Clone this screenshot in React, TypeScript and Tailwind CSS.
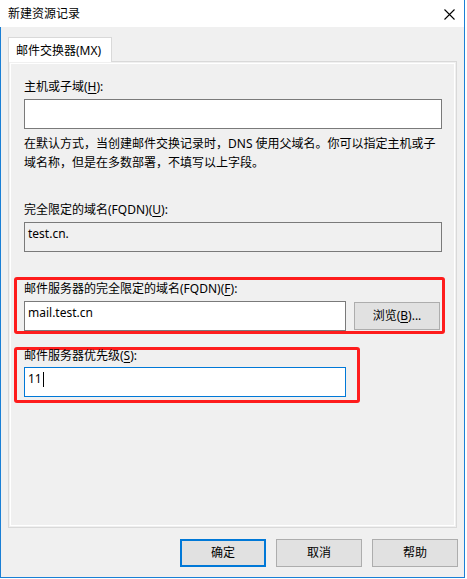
import React from "react";

const font = { fontFamily: '"Noto Sans", "Noto Sans CJK SC", sans-serif' };

function Btn({ children, primary }: { children: React.ReactNode; primary?: boolean }) {
  return (
    <div
      className={
        "flex h-[28px] w-[86px] items-center justify-center bg-[#e1e1e1] text-[12px] leading-[16px] text-black " +
        (primary ? "border-2 border-[#0078d7]" : "border border-[#adadad]")
      }
    >
      {children}
    </div>
  );
}

export default function App() {
  return (
    <div className="flex h-[579px] w-[467px] bg-white text-[12px] text-black" style={font}>
      <div className="flex h-[578px] w-[465px] flex-col border-b border-r border-[#1a7fd5]">
        {/* title bar */}
        <div className="flex h-[27px] items-center justify-between bg-white pl-[8px] pr-[9px]">
          <span className="leading-[16px]">新建资源记录</span>
          <svg width="11" height="11" viewBox="0 0 11 11" className="mt-[1px]">
            <path d="M0.5 0.5 L10.5 10.5 M10.5 0.5 L0.5 10.5" stroke="#000" strokeWidth="1.1" fill="none" />
          </svg>
        </div>
        {/* body */}
        <div className="flex flex-1 flex-col border-l border-[#1a7fd5] bg-[#f0f0f0] pt-[10px]">
          <div className="px-[7px]">
            <div className="relative z-10 -mb-px flex h-[25px] w-[104px] items-center border-l border-r border-t border-[#d9d9d9] bg-white pl-[7px] pt-[1px] leading-[16px]">
              邮件交换器(MX)
            </div>
          </div>
          <div className="mx-[7px] h-[467px] border border-[#d9d9d9] p-px">
            <div className="flex h-full flex-col border border-white">
              {/* content */}
              <div className="flex flex-col pl-[13px]">
                <div className="mt-[15px] leading-[16px]">
                  主机或子域(<u className="underline-offset-2">H</u>):
                </div>
                <div className="mt-[4px] h-[30px] w-[418px] border border-[#7a7a7a] bg-white" />
                <div className="mt-[5px] whitespace-nowrap leading-[19px]">
                  在默认方式，当创建邮件交换记录时，DNS 使用父域名。你可以指定主机或子
                  <br />
                  域名称，但是在多数部署，不填写以上字段。
                </div>
                <div className="mt-[30px] leading-[16px]">
                  完全限定的域名(FQDN)(<u className="underline-offset-2">U</u>):
                </div>
                <div className="mt-[4px] h-[30px] w-[418px] border border-[#7a7a7a] bg-[#f0f0f0] pl-[3px] pt-[3px] leading-[16px]">
                  test.cn.
                </div>
              </div>
              {/* red box 1 */}
              <div className="ml-[3px] mt-[25px] w-[431px] rounded-[3px] border-[3px] border-[#fe1c1c] pl-[7px]">
                <div className="mt-px leading-[16px]">
                  邮件服务器的完全限定的域名(FQDN)(<u className="underline-offset-2">F</u>):
                </div>
                <div className="mt-[4px] flex items-center">
                  <div className="h-[30px] w-[322px] border border-[#7a7a7a] bg-white pl-[3px] pt-[3px] leading-[16px]">
                    mail.test.cn
                  </div>
                  <div className="ml-[8px] flex h-[28px] w-[86px] items-center justify-center border border-[#adadad] bg-[#e1e1e1] leading-[16px]">
                    浏览(<u className="underline-offset-2">B</u>)...
                  </div>
                </div>
              </div>
              {/* red box 2 */}
              <div className="ml-[3px] mt-[13px] w-[346px] rounded-[3px] border-[3px] border-[#fe1c1c] pb-[3px] pl-[7px]">
                <div className="leading-[12px]">
                  邮件服务器优先级(<u className="underline-offset-2">S</u>):
                </div>
                <div className="mt-[5px] flex h-[30px] w-[322px] items-start border border-[#0078d7] bg-white pl-[3px] pt-[3px] leading-[16px]">
                  <span>11</span>
                  <span className="ml-px mt-[1px] h-[15px] w-px bg-black" />
                </div>
              </div>
            </div>
          </div>
          <div className="mt-[11px] flex justify-end gap-[10px] pr-[6px]">
            <Btn primary>确定</Btn>
            <Btn>取消</Btn>
            <Btn>帮助</Btn>
          </div>
        </div>
      </div>
    </div>
  );
}
